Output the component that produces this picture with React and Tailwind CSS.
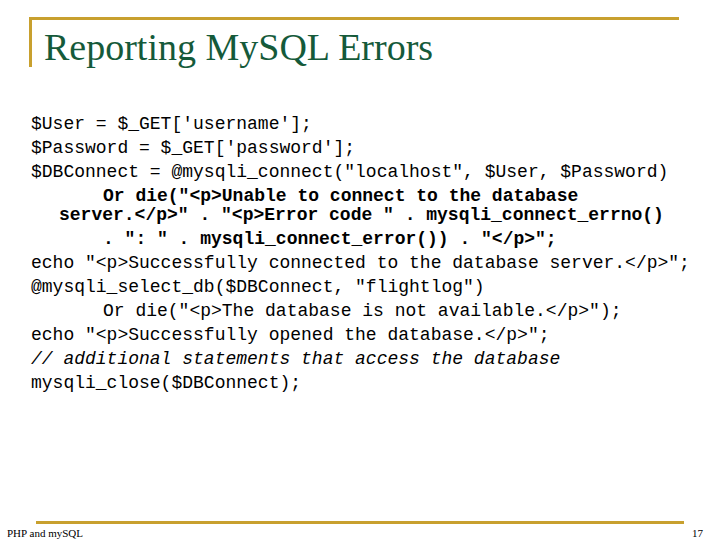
export default function App() {
  return (
    <div className="relative flex h-[540px] w-[720px] flex-col overflow-hidden bg-white">
      <div className="ml-[29px] mt-[17px] h-[50px] w-[650px] border-l-[3px] border-t-[3px] border-[#c8a02e] pl-[12px]">
        <div className="mt-[7px] font-['Liberation_Serif',serif] text-[38px] leading-[40px] text-[#155a3a]">
          Reporting MySQL Errors
        </div>
      </div>
      <div className="mt-[45px] pl-[31px] font-['Liberation_Mono',monospace] text-[18px] text-black">
        <div className="h-[24px] leading-[24px] whitespace-pre">$User = $_GET['username'];</div>
        <div className="h-[24px] leading-[24px] whitespace-pre">$Password = $_GET['password'];</div>
        <div className="h-[24px] leading-[24px] whitespace-pre">$DBConnect = @mysqli_connect("localhost", $User, $Password)</div>
        <div className="h-[19px] pl-[72px] font-bold leading-[24px] whitespace-pre">Or die("&lt;p&gt;Unable to connect to the database</div>
        <div className="h-[24px] pl-[28px] font-bold leading-[24px] whitespace-pre">server.&lt;/p&gt;" . "&lt;p&gt;Error code " . mysqli_connect_errno()</div>
        <div className="h-[24px] pl-[72px] font-bold leading-[24px] whitespace-pre">. ": " . mysqli_connect_error()) . "&lt;/p&gt;";</div>
        <div className="h-[24px] leading-[24px] whitespace-pre">echo "&lt;p&gt;Successfully connected to the database server.&lt;/p&gt;";</div>
        <div className="h-[24px] leading-[24px] whitespace-pre">@mysqli_select_db($DBConnect, "flightlog")</div>
        <div className="h-[24px] pl-[72px] leading-[24px] whitespace-pre">Or die("&lt;p&gt;The database is not available.&lt;/p&gt;");</div>
        <div className="h-[24px] leading-[24px] whitespace-pre">echo "&lt;p&gt;Successfully opened the database.&lt;/p&gt;";</div>
        <div className="h-[24px] italic leading-[24px] whitespace-pre">// additional statements that access the database</div>
        <div className="h-[24px] leading-[24px] whitespace-pre">mysqli_close($DBConnect);</div>
      </div>
      <div className="mt-auto mb-[2px] flex flex-col">
        <div className="ml-[36px] h-[3px] w-[648px] bg-[#c8a02e]" />
        <div className="mt-[4px] flex items-center justify-between pl-[7px] pr-[17px] font-['Liberation_Serif',serif] text-[11px] leading-[10px] text-black">
          <span>PHP and mySQL</span>
          <span>17</span>
        </div>
      </div>
    </div>
  );
}
